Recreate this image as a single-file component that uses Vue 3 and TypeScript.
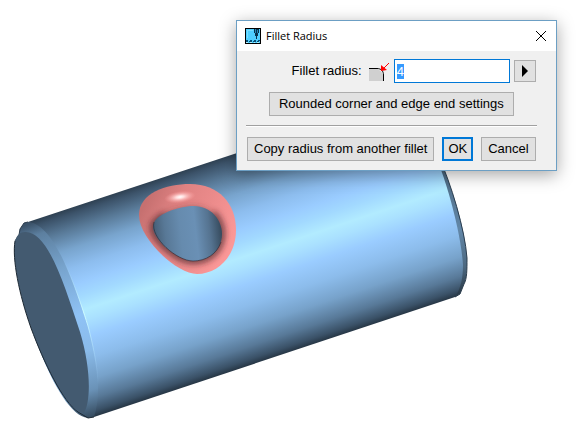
<script setup lang="ts">
import { onMounted, ref } from 'vue'

const radius = ref<string>('4')
const radiusInput = ref<HTMLInputElement | null>(null)

onMounted(() => {
  radiusInput.value?.focus()
  radiusInput.value?.select()
})
</script>

<template>
  <main class="viewport">
    <svg class="model" viewBox="0 0 582 435" role="img" aria-label="Cylinder with a filleted hole">
      <defs>
        <linearGradient id="body" gradientUnits="userSpaceOnUse" x1="0" y1="231" x2="65" y2="427">
          <stop offset="0" stop-color="#2d3f50" />
          <stop offset="0.03" stop-color="#3c536a" />
          <stop offset="0.1" stop-color="#587997" />
          <stop offset="0.19" stop-color="#78a4cd" />
          <stop offset="0.28" stop-color="#8dbdee" />
          <stop offset="0.36" stop-color="#9accff" />
          <stop offset="0.42" stop-color="#a2d9ff" />
          <stop offset="0.49" stop-color="#b2ebff" />
          <stop offset="0.54" stop-color="#aae1ff" />
          <stop offset="0.62" stop-color="#9accff" />
          <stop offset="0.72" stop-color="#8cbceb" />
          <stop offset="0.82" stop-color="#77a2ca" />
          <stop offset="0.91" stop-color="#587998" />
          <stop offset="0.97" stop-color="#3a5167" />
          <stop offset="1" stop-color="#253442" />
        </linearGradient>
        <linearGradient id="bevel" gradientUnits="userSpaceOnUse" x1="30" y1="224" x2="94" y2="417">
          <stop offset="0" stop-color="#3c536a" />
          <stop offset="0.06" stop-color="#5c7f9f" />
          <stop offset="0.25" stop-color="#77a3cc" />
          <stop offset="0.5" stop-color="#8fc2f5" />
          <stop offset="0.68" stop-color="#8abbea" />
          <stop offset="0.87" stop-color="#6a92b7" />
          <stop offset="1" stop-color="#34495c" />
        </linearGradient>
        <linearGradient id="glint" gradientUnits="userSpaceOnUse" x1="60" y1="260" x2="98" y2="385">
          <stop offset="0" stop-color="#a8dcff" stop-opacity="0" />
          <stop offset="0.45" stop-color="#d2ffff" />
          <stop offset="1" stop-color="#9accff" stop-opacity="0" />
        </linearGradient>
        <linearGradient id="farRim" gradientUnits="userSpaceOnUse" x1="442" y1="170" x2="463" y2="292">
          <stop offset="0" stop-color="#4c6982" />
          <stop offset="0.5" stop-color="#6287a8" />
          <stop offset="0.8" stop-color="#4c6880" />
          <stop offset="1" stop-color="#2b3c4b" />
        </linearGradient>
        <linearGradient id="hole" gradientUnits="userSpaceOnUse" x1="153" y1="236" x2="222" y2="228">
          <stop offset="0" stop-color="#435b72" />
          <stop offset="0.18" stop-color="#587896" />
          <stop offset="0.4" stop-color="#668bae" />
          <stop offset="0.62" stop-color="#6a90b5" />
          <stop offset="0.82" stop-color="#557390" />
          <stop offset="1" stop-color="#34485a" />
        </linearGradient>
        <linearGradient id="ring" gradientUnits="userSpaceOnUse" x1="143" y1="208" x2="225" y2="250">
          <stop offset="0" stop-color="#c67070" />
          <stop offset="0.3" stop-color="#e08282" />
          <stop offset="0.6" stop-color="#ea8a8a" />
          <stop offset="1" stop-color="#fb9797" />
        </linearGradient>
        <radialGradient id="shine">
          <stop offset="0" stop-color="#ffffff" />
          <stop offset="0.25" stop-color="#ffdcdc" />
          <stop offset="1" stop-color="#ff9a9a" stop-opacity="0" />
        </radialGradient>
        <filter id="soft" filterUnits="userSpaceOnUse" x="130" y="175" width="120" height="110">
          <feGaussianBlur stdDeviation="3" />
        </filter>
        <clipPath id="ringClip">
          <path d="M139 215C139 193 166 184 190 184C219 184 236 204 236 230C236 256 218 274 197 274C177 274 139 239 139 215Z" />
        </clipPath>
      </defs>

      <path fill="url(#farRim)" d="M425 130C445 164 465 222 467 258C467 270 467 279 464 284L460 294L455 297L435 297Z" />
      <path fill="none" stroke="#2b3d4e" d="M438 155C451 183 465 230 467 258C467 270 467 279 464 284L460 294L455 297" />
      <path fill="url(#body)" d="M28 222L258 146L424 131C445 169 461 233 463 265C463 277 461 288 455 297L94 417Z" />
      <path fill="url(#bevel)" d="M28 222C50 223 70 268 88 326C99 367 101 397 94 417L88 418C53 414 14 285 14 247L19 235L20 229L24 223Z" />
      <path fill="none" stroke="url(#glint)" d="M28 222C50 223 70 268 88 326C99 367 101 397 94 417" />
      <path fill="none" stroke="#2b3c4d" d="M28 222L24 223L20 229L19 235L15 241" />
      <path fill="#435a70" d="M25 232C47 231 63 280 80 332C91 368 91 401 84 413C68 413 44 365 31 328C19 294 12 259 15 241C17 235 20 232 25 232Z" />
      <path fill="none" stroke="#1d2934" d="M15 241C12 259 19 294 31 328C44 363 63 402 78 412L88 418L94 417" />

      <path fill="url(#ring)" d="M139 215C139 193 166 184 190 184C219 184 236 204 236 230C236 256 218 274 197 274C177 274 139 239 139 215Z" />
      <g clip-path="url(#ringClip)">
        <path class="cavity-shadow" filter="url(#soft)" d="M153 227C153 213 182 206 194 206C211 206 222 220 222 234C222 251 208 261 193 261C178 261 153 240 153 227Z" />
        <path class="cavity-edge" filter="url(#soft)" d="M165 215C158 219 153 223 153 227C153 240 178 261 193 261C208 261 222 251 222 234C222 227 219 219 213 213" />
      </g>
      <path fill="url(#hole)" d="M153 227C153 213 182 206 194 206C211 206 222 220 222 234C222 251 208 261 193 261C178 261 153 240 153 227Z" />
      <path class="cavity-line" d="M154 222C150 238 177 261 193 261C206 261 217 254 221 242" />
      <ellipse cx="180" cy="197" rx="16" ry="6" fill="url(#shine)" transform="rotate(-8 180 197)" />
    </svg>

    <section class="dialog" role="dialog" aria-labelledby="dialog-title">
      <header class="titlebar">
        <svg class="app-icon" viewBox="0 0 16 16" shape-rendering="crispEdges" aria-hidden="true">
          <rect width="16" height="16" fill="#000" />
          <rect x="1" y="1" width="14" height="14" fill="#4fcfff" />
          <path fill="#78ddff" d="M2 2h6v1H3v7H2z" />
          <path fill="#08334e" d="M9 1h5v4h-1v3h-1v3h-1V8h-1V5H9z" />
          <path fill="#2388b5" d="M10 1h1v4h-1zM12 2h1v3h-1z" />
          <path fill="#075078" d="M1 12h2v1h2v-1h2v1h2v-1h2v1h2v-1h2v1h-1v1h-2v-1h-1v1H8v-1H7v1H4v-1H3v1H1z" />
          <path fill="#b3efff" d="M1 14h2v1H1zM5 14h2v1H5zM9 14h1v1H9zM12 14h2v1h-2z" />
        </svg>
        <h1 id="dialog-title">Fillet Radius</h1>
        <button class="close" type="button" aria-label="Close">
          <svg viewBox="0 0 10 10" aria-hidden="true"><path d="M0 0L10 10M10 0L0 10" /></svg>
        </button>
      </header>

      <form class="content" @submit.prevent>
        <div class="radius-row">
          <label for="radius">Fillet radius:</label>
          <svg class="fillet-icon" viewBox="0 0 20 20" aria-hidden="true">
            <path fill="#d0d0d0" d="M0 8H8L12 10L14 14V20H0Z" />
            <path class="fillet-line" d="M0 7.500H8C12 7.500 14.500 10 14.500 14V20" />
            <path class="fillet-arrow" d="M20 2L14 8" />
            <path fill="#f00" d="M12 4L18 9L12 10Z" />
          </svg>
          <input id="radius" ref="radiusInput" v-model="radius" type="text" autocomplete="off" />
          <button class="more" type="button" aria-label="More radius options">
            <svg viewBox="0 0 6 12" aria-hidden="true"><path d="M0 0L6 6L0 12Z" /></svg>
          </button>
        </div>
        <button class="settings" type="button">Rounded corner and edge end settings</button>
        <hr />
        <footer class="actions">
          <button type="button">Copy radius from another fillet</button>
          <button class="primary" type="submit">OK</button>
          <button type="button">Cancel</button>
        </footer>
      </form>
    </section>
  </main>
</template>

<style>
body {
  margin: 0;
  background: #fff;
}
</style>

<style scoped>
.viewport {
  position: relative;
  overflow: hidden;
  font-family: "Liberation Sans", Arial, sans-serif;
  font-size: 13px;
  line-height: 16px;
  color: #000;
}

.model {
  display: block;
  width: 100%;
}

.cavity-shadow {
  fill: #5c2c30;
  fill-opacity: 0.4;
}

.cavity-edge {
  fill: none;
  stroke: #44252a;
  stroke-opacity: 0.7;
  stroke-width: 6;
}

.cavity-line {
  fill: none;
  stroke: #2d2830;
  stroke-opacity: 0.6;
}

.dialog {
  position: absolute;
  top: 20px;
  left: 236px;
  background: #f0f0f0;
  border: 1px solid #6c9fc4;
  box-shadow: 0 4px 16px rgba(0, 0, 0, 0.35);
}

.titlebar {
  display: flex;
  align-items: center;
  height: 30px;
  padding: 0 10px 0 8px;
  background: #fff;
}

.app-icon {
  width: 16px;
  height: 16px;
}

h1 {
  flex: 1;
  margin: 0 0 0 5px;
  font-family: "Open Sans", "Noto Sans", sans-serif;
  font-size: 11px;
  font-weight: 400;
}

button {
  box-sizing: border-box;
  height: 24px;
  padding: 0 6px;
  font: inherit;
  color: inherit;
  white-space: nowrap;
  background: #e1e1e1;
  border: 1px solid #adadad;
  border-radius: 0;
}

.close {
  display: flex;
  align-items: center;
  padding: 0;
  background: none;
  border: 0;
}

.close svg {
  width: 10px;
  height: 10px;
  overflow: visible;
  fill: none;
  stroke: #000;
}

.content {
  display: flex;
  flex-direction: column;
  padding: 8px 20px 9px 10px;
}

.radius-row {
  display: flex;
  align-items: center;
  justify-content: flex-end;
}

.fillet-icon {
  width: 20px;
  height: 20px;
  margin: 0 5px 0 7px;
}

.fillet-line {
  fill: none;
  stroke: #000;
}

.fillet-arrow {
  fill: none;
  stroke: #f00;
  stroke-width: 1;
}

input {
  box-sizing: border-box;
  width: 116px;
  height: 24px;
  padding: 0 2px;
  font: inherit;
  color: #000;
  background: #fff;
  border: 1px solid #0078d7;
  border-radius: 0;
  outline: 0;
}

input::selection {
  color: #fff;
  background: rgba(51, 153, 255, 0.99);
}

.more {
  display: flex;
  align-items: center;
  justify-content: center;
  width: 22px;
  height: 22px;
  margin-left: 4px;
  padding: 0;
}

.more svg {
  width: 6px;
  height: 12px;
}

.settings {
  align-self: center;
  margin-top: 9px;
  padding: 0 9px;
}

hr {
  align-self: stretch;
  height: 1px;
  margin: 9px -1px 10px;
  background: #a0a0a0;
  border: 0;
  border-bottom: 1px solid #fff;
}

.actions {
  display: flex;
  gap: 8px;
}

.primary {
  padding: 0 4px;
  border: 2px solid #0078d7;
}
</style>
